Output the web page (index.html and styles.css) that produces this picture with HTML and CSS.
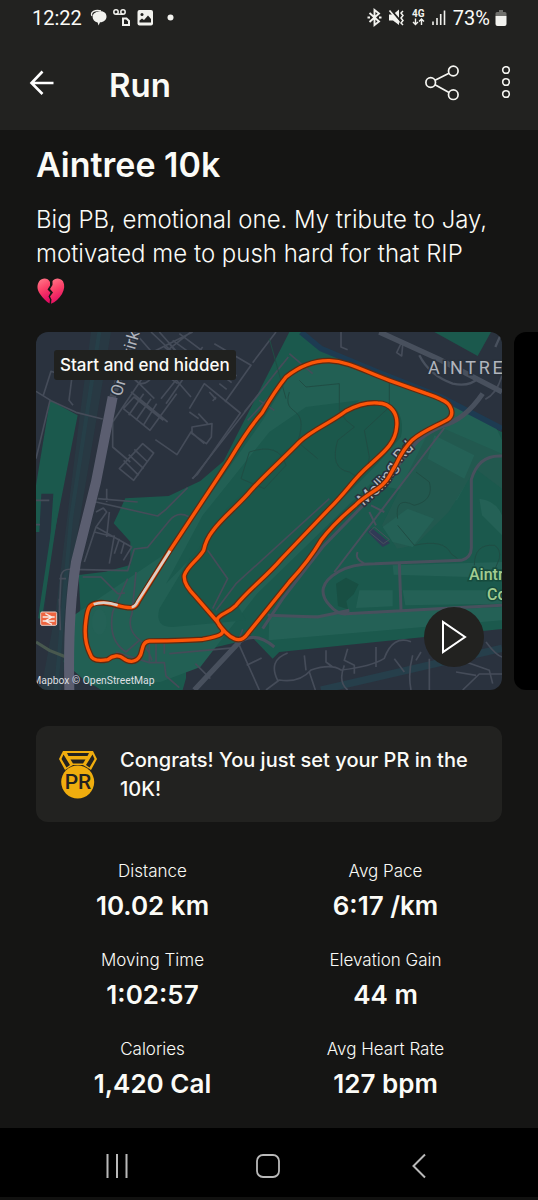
FILE: index.html
```html
<!DOCTYPE html>
<html lang="en">
<head>
<meta charset="utf-8">
<meta name="viewport" content="width=device-width, initial-scale=1">
<title>Run – Aintree 10k</title>
<link rel="stylesheet" href="styles.css">
</head>
<body>
<div class="screen">
  <header class="top">
    <div class="status">
      <span class="status-time">12:22</span>
      <svg class="status-left" width="86" height="20" viewBox="90 8 86 20" aria-hidden="true">
        <path d="M92 16c-2-4 3-6.500 9-5" fill="none" stroke="#f2f2ee" stroke-width="1.300"/>
        <path d="M99 11.500c4.500-1 7.500 1.500 7.500 5.200 0 3-2.500 5.300-6.500 5.600L98.600 25.500l-1-3c-3-.5-5-2.800-5-5.400 0-3 2.400-5.200 6.400-5.600z" fill="#f2f2ee"/>
        <g fill="none" stroke="#f2f2ee" stroke-width="1.500">
          <circle cx="116" cy="12" r="2.200"/><circle cx="123" cy="12" r="2.200"/><path d="M116 14.200h7"/>
          <path d="M123 18.500h3.500l2.500 2.500v4h-6z" stroke-width="2"/>
        </g>
        <rect x="137.500" y="10" width="15.500" height="15.500" rx="2" fill="#f2f2ee"/>
        <path d="M139.500 22.500v-2l2.500-2 2 1.500 4-4.500 3 3.500v3.500z" fill="#222220"/><circle cx="142" cy="14.500" r="1.500" fill="#222220"/>
        <circle cx="170.500" cy="17.500" r="3" fill="#f2f2ee"/>
      </svg>
      <svg class="status-right" width="82" height="20" viewBox="368 8 82 20" aria-hidden="true">
        <path d="M371.500 13l9.500 8.500-4.500 3.500V10l4.500 3.500-9.500 8.500M369.500 17.500h2.500M381 17.500h2.500" fill="none" stroke="#f2f2ee" stroke-width="1.900"/>
        <path d="M391 14.500h4l6-5v15.500l-6-4.500h-4z" fill="#f2f2ee"/>
        <path d="M392.500 9.500l12 14" stroke="#222220" stroke-width="2"/><path d="M391.500 10.500l10 12" stroke="#f2f2ee" stroke-width="1.600"/>
        <path d="M405 11l-2 2 2 2.500-2 2.500 2 2.500-2 2.500 2 2" fill="none" stroke="#f2f2ee" stroke-width="1.500"/>
        <text x="414" y="17" class="network">4G</text>
        <path d="M417.500 18.500v6M415 22l2.500 2.500 2.500-2.500M423.500 25v-6M421 21.500l2.500-2.500 2.500 2.500" fill="none" stroke="#f2f2ee" stroke-width="1.400"/>
        <path d="M435 21.500V25M439 18V25M442.700 14V25M446.500 10.500V25" stroke="#f2f2ee" stroke-width="1.600"/>
      </svg>
      <span class="status-battery">73%</span>
      <svg width="12" height="18" viewBox="0 0 12 18" aria-hidden="true"><path d="M4 1h4v2h2q1.500 0 1.500 1.500V7H.5V4.500Q.5 3 2 3h2z" fill="#70706c"/><path d="M.5 7h11v8q0 2-2 2h-7q-2 0-2-2z" fill="#f2f2ee"/></svg>
    </div>
    <div class="bar">
      <button class="icon-button" aria-label="Back"><svg width="26" height="26" viewBox="0 0 26 26"><path d="M24.500 13H3M13.500 1.500L2.500 13l11 11" fill="none" stroke="#fff" stroke-width="2.600"/></svg></button>
      <h1 class="bar-title">Run</h1>
      <button class="icon-button share" aria-label="Share"><svg width="36" height="38" viewBox="0 0 36 38"><g fill="none" stroke="#f5f5f1" stroke-width="1.700"><circle cx="6.700" cy="18.500" r="4.800"/><circle cx="29.300" cy="7" r="4.800"/><circle cx="29.300" cy="30.700" r="4.800"/><path d="M11 16.200L25 9.200M11 20.800L25 28.400"/></g></svg></button>
      <button class="icon-button" aria-label="More options"><svg width="10" height="34" viewBox="0 0 10 34"><g fill="none" stroke="#f5f5f1" stroke-width="1.600"><circle cx="5" cy="4" r="3.300"/><circle cx="5" cy="16" r="3.300"/><circle cx="5" cy="28" r="3.300"/></g></svg></button>
    </div>
  </header>

  <main class="content">
    <section class="intro">
      <h2 class="title">Aintree 10k</h2>
      <p class="description">Big PB, emotional one. My tribute to Jay, motivated me to push hard for that RIP</p>
      <svg class="heart" role="img" aria-label="Broken heart" width="30" height="28" viewBox="-1 0 30 28">
        <defs><linearGradient id="heart-fill" x2=".3" y2="1"><stop stop-color="#ff7d8c"/><stop offset=".5" stop-color="#fb4168"/><stop offset="1" stop-color="#e40d62"/></linearGradient></defs>
        <path d="M13 5C11 .7 5 .5 2.200 4.300-.2 8-.2 12.500 3 17c3 4.300 6 7.500 9.500 9.500l.500-4-1.500-3 2-4-3-3 2.500-4z" fill="url(#heart-fill)"/>
        <path d="M15.500 4C18 .5 23 .5 26 4.300c2 4 1.500 8-1 12.700-3 4.500-6.500 8-11 9.800l.500-4.300-1.500-3 3-4-3-3.500 2.500-4z" fill="url(#heart-fill)"/>
      </svg>
    </section>

    <section class="carousel" aria-label="Activity media">
      <div class="map">
        <svg class="map-art" viewBox="0 0 1398 1074" role="img" aria-label="Map of the run route around Aintree">
          <defs>
            <path id="route" d="M402 655L580 385Q640 285 678 243C700 205 720 172 750 135C790 103 830 85 880 86C935 88 980 115 1060 145L1170 184Q1195 192 1215 202C1250 215 1256 250 1235 263C1205 280 1160 297 1130 323C1107 345 1095 365 1080 397C1060 430 1055 450 1025 470C995 490 978 500 960 518C920 552 886 583 855 625Q820 685 760 750L635 905Q617 930 595 920Q570 910 541 866L478 793C455 770 442 750 445 730C455 700 485 685 503 655Q510 622 530 597C560 555 610 518 645 475C690 425 740 382 790 330C830 292 880 275 930 237C970 215 1000 211 1025 213C1065 214 1087 245 1082 285C1078 340 1030 370 1000 400C950 443 940 470 880 530L735 682C690 735 640 770 600 820C575 845 550 845 543 863Q545 875 558 890C570 910 535 915 500 922Q455 926 340 927C317 930 320 955 313 970C300 995 275 990 262 979C250 968 230 970 215 983C185 989 167 985 162 965C147 935 145 900 150 865C155 825 160 813 195 812C230 813 260 829 287 827Q300 825 307 808L402 655z"/>
            <path id="melling" d="M983 524C1010 493 1050 475 1070 433C1085 401 1112 360 1170 326"/>
          </defs>
          <rect width="1398" height="1074" fill="#2a323e"/>
          <path d="M165 0h60L125 600 100 900 75 1074H15L60 830 130 260z" fill="#283943"/>
          <path d="M190 0L105 560 60 1074" fill="none" stroke="#263f48" stroke-width="12"/>
          <path d="M42 205l83 45-65 330-50 260H0V460z" fill="#1b594d"/>
          <path d="M16 485h36L28 840H0V600h10z" fill="#283441"/>
          <path d="M60 540L12 860" stroke="#1b594d" stroke-width="12"/>
          <!-- parkland -->
          <path d="M760 0h45l50 45 543 255v591L730 960l-20 20-75-78-30 28-155 37v72l-10 35H195l-60-40 18-45-40-30 20-130-5-100 80-10 75-20v-70l-50-55 35-75 130-7 95-45 70-60z" fill="#1b594d"/>
          <path d="M1195 0h170l-40 72z" fill="#1b594d"/>
          <path d="M410 650l185-265 85-120 85-140 90-40 90 15 300 115 130 60 23 50v110l-75-40-60 110-260-50-340 330-170 220-120 45-210 10-80-70 15-130z" fill="#226054"/>
          <path d="M700 300l110-75 160-20-100 85-330 310-150 155 110-205z" fill="#1b594d"/>
          <path d="M460 680l-90 150q-15 55 40 55l220-20-60-110z" fill="#1b594d"/>
          <path d="M1000 205c70-5 110 35 95 110l-70 80-250 250-190 200-100-50-45-60 18-50 50-60 60-90 180-180 160-100z" fill="#1b584b"/>
          <path d="M1190 275l208 90v105l-80-60-80 130-100 100-55 10-45-70z" fill="#22594f"/>
          <path d="M1195 310l120 60-30 70-110-60zM1330 500q50 5 68 50v60l-60-60zM1070 700l328-10v48l-325-10zM970 775h100v48l-110 5zM1100 775h298v40l-290 5zM700 855l698-30v40l-700 60z" fill="#246156"/>
          <path d="M1040 585l75-55 80 30-65 85-60-15z" fill="#246156"/>
          <path d="M900 755l30-18 38 20-15 30-22 20 5 25-30-10z" fill="#184f43"/>
          <ellipse cx="190" cy="870" rx="22" ry="38" fill="#246156"/>
          <path d="M795 0l60 50 170 70 190 75 183 95" fill="none" stroke="#1d3b52" stroke-width="17"/>
          <path d="M855 1074l543-125" stroke="#263f4b" stroke-width="22"/>
          <path d="M995 600l45 45 22-12-55-45z" fill="#303a56"/>
          <!-- residential streets -->
          <g fill="none" stroke="#454c59" stroke-width="5" stroke-linejoin="round">
            <path d="M0 178l45 28 75 35 80 20M22 190l23-72 43 15 5-28 18 5-12 95 12 15M0 380l42-175M0 505h40M0 578h12"/>
            <path d="M295 0l170 195M310 80L470 0M400 35l25 30M345 0l80 75M370 0l80 90M300 145l55 55M262 230l80 65 80-110M262 230l32-35 88 70M285 180l110 90M278 250l45-65M300 265l45-65M322 280l40-65M230 270l95-140 50-60 115-90M375 200l125-155M390 215l100-145M340 145q-25 20-42 0t20-28 22 28"/>
            <path d="M365 62l85 60M385 45l85 60M410 25l80 58M430 5l80 60M335 90l90 65M250 410l70-75 33 28-60 82zM263 385l45 45M278 368l45 42M295 352l40 38M230 270v75l53 45"/>
            <path d="M535 35l110 65-78 110M650 92l70-92M460 230l45-75 108 88-130 185-15 12M460 240l28 20M468 285l60-10-2 40-15 20-43-30zM505 335l-40-35-42 68-65-45M520 180l20 22M540 195l-10 12M580 115l22 17M565 135l22 17M550 155l22 17M500 95l-15 20M515 275l-28-30"/>
            <path d="M185 500l120 10M212 470v40M180 540l22-12 10 12-32 45 107 60-25 40M180 585l-35 105M175 600l60 15M220 540l-8 75M235 610l-15 85M250 620l-15 45M265 630l-10 35"/>
            <path d="M70 840l5-110q5-20 30-18l170 4 20-65 40-5 65-80q25-30 58-12M180 510l185 42 25-20 65-65M70 740h20M70 800l3 95M140 735h55l50 50 22-2M275 740l-45 100q-15 85 40 120l40-35M300 720l-12 125q-20 50 30 85l20 30 10 25M240 960l100 32h45l5 40 40 35M385 965v-30M340 930v60M360 930v60M400 965l200-18 20-55"/>
            <path d="M515 655l60 85-45 90M540 835l60-80L880 500M610 940l60 134M632 1000l45-22M478 995l45 45M760 65l70 60M757 75L625 240M740 95L470 440M765 125l-130 140M670 205l45 30M915 0v45l20 8M1085 20l15 20-3 32-15-10 18-38M1398 130q-15 55-50 72"/>
            <path d="M690 1074l40-30q60 10 95-30 60-20 90 0 90-10 130-35 25-70 80-50M725 1045q-30-60 30-82M805 970l5 45M870 955v35l20 15M935 950l-10 35 30 15v25M1020 945v60M1075 980l30 40M925 1000q-20 50 10 74M820 1020l18 54M1130 970q-15 55-5 104M1180 980v100M1260 1020l60 10M1280 1074l50-48h68M1290 990l70 25 10 40M1350 930q30 40 48 45M1155 960l-15 25"/>
          </g>
          <g fill="none" stroke="#204d44" stroke-width="3">
            <path d="M760 180c-25 80 65 30 25 150l60 50M790 145l20 20 100-10v80l20 30 25 20-50 40q-25 85 35 95 50 40 60-45l-15-80 75-70V150l-10-20M700 20l50 180M640 360q90-30 110 40l-65 70-70-30zM1085 560q-10-70 50-40 60-15 45-70l-40-30M1085 580l50 60q90-20 110 25l20 15M1315 700q0-65 60-60 20 10 15 40l-25 60"/>
          </g>
          <!-- main roads -->
          <g fill="none" stroke="#48505d">
            <path d="M1398 372q-70-5-92 70v205q0 30-30 38l-260 10q-70 0-110 25-75 45-25 100 25 30 50 25l467-25M600 940q50-50 115 5M695 850l150 5 95-20M1090 695l5 138" stroke-width="9"/>
            <path d="M1225 288L895 720M965 660q-10 20 20 35M1005 520l40 20M1000 540l20 40" stroke-width="6"/>
            <path d="M1150 320l-70 90-50 60-170 175-120 155-60 90" stroke-width="9"/>
            <path d="M1340 185q-55 80-120 95-90 40-110 90" stroke-width="15"/>
            <path d="M610 930L475 1074M1030 0l180 82 188 98" stroke-width="16"/>
            <path d="M1150 70q30 60 100 85 50 10 75-15M1398 0l-20 45" stroke-width="7"/>
            <path d="M1000 600l42 35 18-12-45-38z" stroke-width="3"/>
          </g>
          <path d="M0 930l40 25 50 20" stroke="#48584e" stroke-width="9" fill="none"/>
          <path d="M295 0l-65 195" stroke="#454c59" stroke-width="20"/>
          <path d="M230 195L180 450 120 690Q95 850 100 1074" fill="none" stroke="#5b5e70" stroke-width="30"/>
          <!-- place labels -->
          <g class="place">
            <text x="1176" y="126" class="district">AINTREE</text>
            <text transform="translate(256 195) rotate(-74)" class="street">Ormskirk</text>
            <text class="street melling"><textPath href="#melling">Melling Rd</textPath></text>
          </g>
          <g class="place golf"><text x="1299" y="743">Aintree</text><text x="1353" y="804">Course</text></g>
          <!-- route -->
          <use href="#route" class="route-edge"/>
          <use href="#route" class="route-line"/>
          <path d="M402 656L305 808Q298 824 287 825M245 820q-40-15-72-3" fill="none" stroke="#d9cdc6" stroke-width="8"/>
          <!-- railway station -->
          <rect x="14" y="840" width="48" height="40" rx="4" fill="#ee6540" stroke="#e7c9be" stroke-width="3"/>
          <path d="M20 855h36M20 867h36M28 845l20 10-20 12 20 10" fill="none" stroke="#f6ebe6" stroke-width="4"/>
          <text x="-11" y="1056" class="credit">Mapbox © OpenStreetMap</text>
        </svg>
        <span class="hidden-note">Start and end hidden</span>
        <button class="play" aria-label="Play route"><svg width="28" height="36" viewBox="0 0 28 36"><path d="M3 3v30l22-15z" fill="none" stroke="#fff" stroke-width="2"/></svg></button>
      </div>
      <div class="next-card"></div>
    </section>

    <section class="record">
      <svg width="40" height="50" viewBox="0 0 40 50" aria-hidden="true">
        <path d="M5 1h30l4 8-6 11-3-2-5-3H15l-5 3-3 2L1 9z" fill="#f0ad0e"/>
        <path d="M9 3h22l-1.500 3h-19zM12.500 9.500h15l-2.500 4H15zM5.500 4.500L12 15l-3.500 2.500L3.500 9zM34.500 4.500L28 15l3.500 2.500 5-8.500z" fill="#222220"/>
        <circle cx="19.700" cy="32" r="16.500" fill="#f0ad0e"/>
        <text x="20" y="39" text-anchor="middle" class="medal-text">PR</text>
      </svg>
      <p class="record-text">Congrats! You just set your PR in the 10K!</p>
    </section>

    <dl class="stats">
      <div class="stat"><dt>Distance</dt><dd>10.02 km</dd></div>
      <div class="stat"><dt>Avg Pace</dt><dd>6:17 /km</dd></div>
      <div class="stat"><dt>Moving Time</dt><dd>1:02:57</dd></div>
      <div class="stat"><dt>Elevation Gain</dt><dd>44 m</dd></div>
      <div class="stat"><dt>Calories</dt><dd>1,420 Cal</dd></div>
      <div class="stat"><dt>Avg Heart Rate</dt><dd>127 bpm</dd></div>
    </dl>
  </main>

  <nav class="system-nav" aria-label="System">
    <button class="icon-button" aria-label="Recent apps"><svg width="24" height="26" viewBox="0 0 24 26"><path d="M2.500 1v24M12 1v24M21.500 1v24" stroke="#b9b9b9" stroke-width="2"/></svg></button>
    <button class="icon-button" aria-label="Home"><svg width="24" height="26" viewBox="0 0 24 26"><rect x="1" y="2" width="22" height="22" rx="6" fill="none" stroke="#b9b9b9" stroke-width="1.800"/></svg></button>
    <button class="icon-button" aria-label="Navigate back"><svg width="24" height="26" viewBox="0 0 24 26"><path d="M18 1.500L6.500 13 18 24.500" fill="none" stroke="#b9b9b9" stroke-width="2"/></svg></button>
  </nav>
</div>
</body>
</html>
```
FILE: styles.css
```css
* { box-sizing: border-box; }

body {
  margin: 0;
  background: #151514;
  color: #fbfbf7;
  font-family: Inter, "Liberation Sans", sans-serif;
}

h1, h2, p, dl, dd { margin: 0; }

.screen {
  display: flex;
  flex-direction: column;
  min-height: 100vh;
}

.top { background: #222220; }

.status {
  display: flex;
  align-items: center;
  height: 36px;
  padding: 0 31px 0 32px;
  font: 400 20px/36px Roboto, sans-serif;
}

.status-left { margin-left: 8px; }
.status-right { margin-left: auto; }
.status-battery { margin: 0 5px; }
.network { font: 700 10px Roboto, sans-serif; fill: #f2f2ee; }

.bar {
  display: flex;
  align-items: center;
  height: 94px;
  padding: 0 27px 0 29px;
}

.icon-button {
  display: flex;
  padding: 0;
  border: 0;
  background: none;
}

.bar-title {
  margin-left: 54px;
  padding-top: 3px;
  font-size: 33px;
  font-weight: 600;
  line-height: 40px;
}

.share { margin: 0 41px 0 auto; }

.content { flex: 1; }

.intro { padding: 13px 36px 0; }

.title {
  font-size: 34px;
  font-weight: 600;
  line-height: 44px;
}

.description {
  margin-top: 16px;
  font-size: 24px;
  font-weight: 300;
  line-height: 34px;
}

.heart { display: block; margin-top: 6px; }

.carousel {
  display: flex;
  gap: 12px;
  margin-top: 27px;
  padding-left: 36px;
  overflow: hidden;
}

.map {
  position: relative;
  flex: 0 0 calc(100% - 36px);
  border-radius: 12px;
  overflow: hidden;
}

.map-art { display: block; width: 100%; height: auto; }

.route-edge,
.route-line {
  fill: none;
  stroke: #612910;
  stroke-width: 17;
  stroke-linejoin: round;
}

.route-line { stroke: #fc5508; stroke-width: 10; }

.place {
  font-family: Roboto, sans-serif;
  fill: #b1b5bd;
  stroke: #29313c;
  stroke-width: 9;
  paint-order: stroke;
}

.district { font-size: 54px; letter-spacing: 8px; }
.street { font-size: 50px; }
.golf { font-size: 48px; font-weight: 500; fill: #a3cc91; stroke: #164b3d; }
.credit { font: 31px Roboto, sans-serif; fill: #dedfe1; }

.hidden-note {
  position: absolute;
  top: 18px;
  left: 18px;
  padding: 1px 6px 0;
  border-radius: 3px;
  background: #20211f;
  font-size: 17px;
  font-weight: 500;
  line-height: 29px;
}

.play {
  position: absolute;
  right: 18px;
  bottom: 23px;
  display: flex;
  align-items: center;
  justify-content: center;
  width: 60px;
  height: 60px;
  padding: 0;
  border: 0;
  border-radius: 50%;
  background: #222220;
}

.next-card {
  flex: 0 0 calc(100% - 36px);
  border-radius: 12px;
  background: #000;
}

.record {
  display: flex;
  align-items: center;
  gap: 22px;
  margin: 36px 36px 0;
  padding: 20px 22px 18px;
  border-radius: 12px;
  background: #222220;
}

.record svg { flex: none; }
.medal-text { font: 500 21px Roboto, sans-serif; fill: #222220; }

.record-text {
  font-size: 20px;
  font-weight: 500;
  line-height: 29px;
}

.stats {
  display: grid;
  grid-template-columns: 1fr 1fr;
  row-gap: 25px;
  margin: 37px 36px 0;
  text-align: center;
}

.stat dt {
  font-size: 17px;
  font-weight: 300;
  line-height: 24px;
}

.stat dd {
  margin-top: 5px;
  font-size: 26px;
  font-weight: 600;
  line-height: 35px;
}

.system-nav {
  display: flex;
  align-items: center;
  justify-content: space-between;
  height: 72px;
  padding: 6px 107px 0 105px;
  border-bottom: 3px solid #111110;
  background: #000;
}
```
